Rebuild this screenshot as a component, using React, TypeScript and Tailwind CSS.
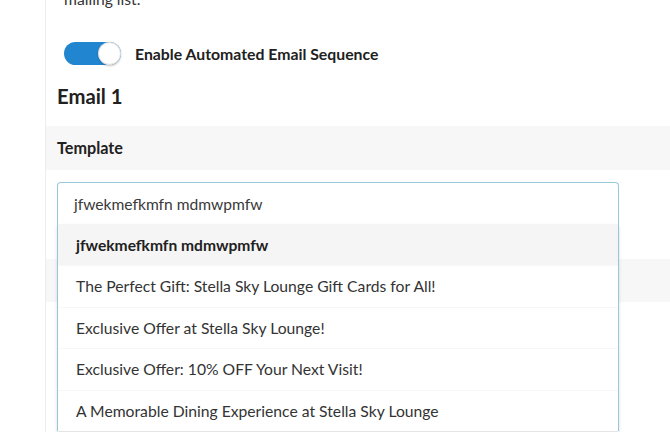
const items = [
  'jfwekmefkmfn mdmwpmfw',
  'The Perfect Gift: Stella Sky Lounge Gift Cards for All!',
  'Exclusive Offer at Stella Sky Lounge!',
  'Exclusive Offer: 10% OFF Your Next Visit!',
  'A Memorable Dining Experience at Stella Sky Lounge',
];

export default function App() {
  return (
    <div
      className="flex w-[670px] h-[432px] overflow-hidden bg-white text-[#212121]"
      style={{ fontFamily: 'Lato, "Open Sans", sans-serif' }}
    >
      <div className="w-[46px] shrink-0 border-r border-[#ededed]" />

      <div className="relative flex-1 flex flex-col">
        <p className="mt-[-11px] pl-[18px] text-[15.7px] leading-[20px] text-[#333]">mailing list.</p>

        <div className="mt-[33px] pl-[18px] flex items-center gap-[14px]">
          <div className="relative w-[57px] h-[23px] rounded-full bg-[#2185d0]">
            <div className="absolute right-0 top-0 w-[23px] h-[23px] rounded-full bg-white shadow-[0_1px_2px_0_rgba(34,36,38,0.25),inset_0_0_0_1px_rgba(34,36,38,0.15)]" />
          </div>
          <span className="text-[15.8px] font-bold leading-[18px]">Enable Automated Email Sequence</span>
        </div>

        <h3 className="mt-[19px] pl-[11px] text-[20.3px] font-bold leading-[24px]">Email 1</h3>

        <div className="mt-[18px] h-[44px] bg-[#f7f7f7] px-[11px] flex items-center">
          <span className="text-[16.2px] font-bold leading-[18px]">Template</span>
        </div>

        <div className="relative mt-[12px] ml-[11px] w-[562px]">
          <div className="h-[42px] rounded-t-[4px] border border-[#96c8da] border-b-0 flex items-center pl-[16px] text-[15.6px] leading-[18px] text-[#3a3a3a]">
            jfwekmefkmfn mdmwpmfw
          </div>
          <div className="absolute left-0 top-[42px] z-10 w-[562px] bg-white border-x border-[#96c8da] shadow-[0_2px_3px_0_rgba(34,36,38,0.15)]">
            {items.map((t, i) => (
              <div
                key={t}
                className={
                  i === 0
                    ? 'h-[41px] flex items-center pl-[18px] text-[15.6px] leading-[18px] font-bold bg-[#f5f5f5]'
                    : 'h-[41.5px] flex items-center pl-[18px] text-[15.7px] leading-[18px] text-[#333] border-t border-[#f7f7f7]'
                }
              >
                {t}
              </div>
            ))}
          </div>
        </div>

        <div className="mt-[35px] h-[43px] bg-[#f7f7f7]" />
      </div>
    </div>
  );
}
